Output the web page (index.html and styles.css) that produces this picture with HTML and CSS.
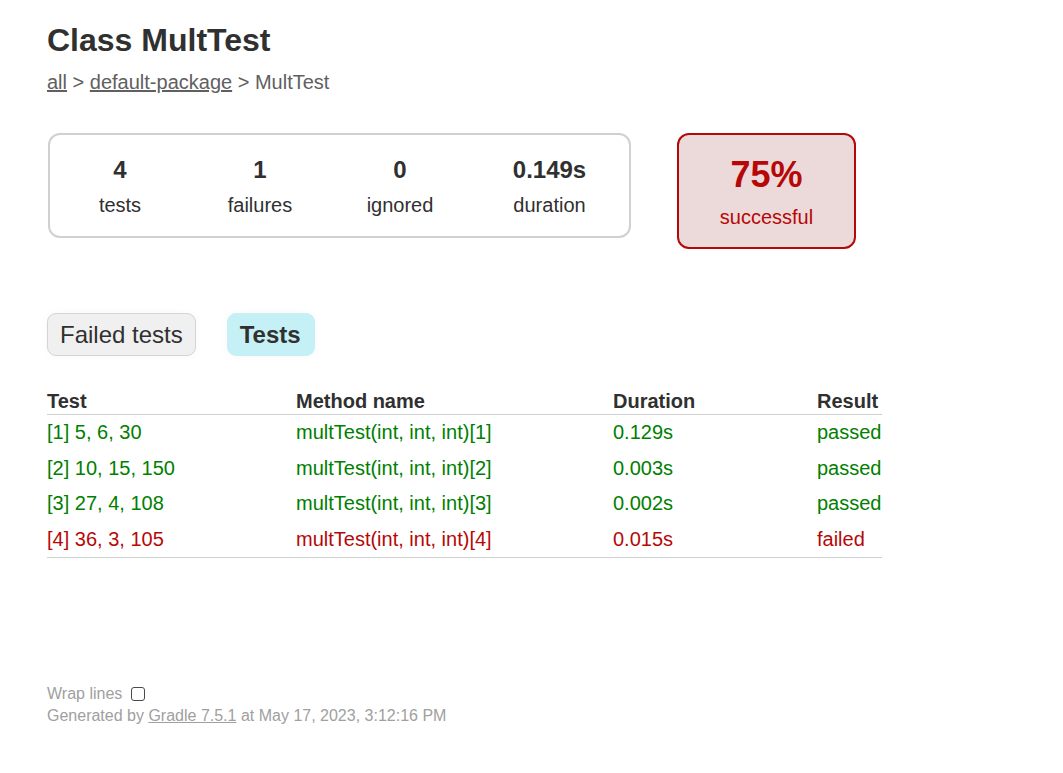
FILE: index.html
```html
<!DOCTYPE html>
<html lang="en">
<head>
<meta charset="utf-8">
<title>Test results - Class MultTest</title>
<link rel="stylesheet" href="styles.css">
</head>
<body>
<div class="content">
  <h1 class="title">Class MultTest</h1>
  <div class="breadcrumbs"><a href="#">all</a> &gt; <a href="#">default-package</a> &gt; MultTest</div>

  <div class="summary">
    <div class="summary-group">
      <div class="info-box">
        <div class="counter">4</div>
        <p class="label">tests</p>
      </div>
      <div class="info-box">
        <div class="counter">1</div>
        <p class="label">failures</p>
      </div>
      <div class="info-box">
        <div class="counter">0</div>
        <p class="label">ignored</p>
      </div>
      <div class="info-box">
        <div class="counter">0.149s</div>
        <p class="label">duration</p>
      </div>
    </div>
    <div class="success-rate">
      <div class="percent">75%</div>
      <p class="label">successful</p>
    </div>
  </div>

  <ul class="tab-links">
    <li class="tab"><a href="#">Failed tests</a></li>
    <li class="tab selected"><a href="#">Tests</a></li>
  </ul>

  <table class="results">
    <colgroup>
      <col class="col-test">
      <col class="col-method">
      <col class="col-duration">
      <col class="col-result">
    </colgroup>
    <thead>
      <tr><th>Test</th><th>Method name</th><th>Duration</th><th>Result</th></tr>
    </thead>
    <tbody>
      <tr class="success"><td>[1] 5, 6, 30</td><td>multTest(int, int, int)[1]</td><td>0.129s</td><td>passed</td></tr>
      <tr class="success"><td>[2] 10, 15, 150</td><td>multTest(int, int, int)[2]</td><td>0.003s</td><td>passed</td></tr>
      <tr class="success"><td>[3] 27, 4, 108</td><td>multTest(int, int, int)[3]</td><td>0.002s</td><td>passed</td></tr>
      <tr class="failures"><td>[4] 36, 3, 105</td><td>multTest(int, int, int)[4]</td><td>0.015s</td><td>failed</td></tr>
    </tbody>
  </table>

  <div class="footer">
    <div class="wrap-line">
      <label class="wrap-label" for="wrap">Wrap lines</label>
      <input class="wrap-toggle" id="wrap" type="checkbox">
    </div>
    <p class="generated">Generated by <a href="#">Gradle 7.5.1</a> at May 17, 2023, 3:12:16 PM</p>
  </div>
</div>
</body>
</html>
```

FILE: styles.css
```css
html, body {
  margin: 0;
  padding: 0;
  background: #ffffff;
}

body {
  font-family: "Liberation Sans", Arial, sans-serif;
  font-size: 20px;
  line-height: 23px;
  color: #303030;
}

a {
  color: inherit;
}

.content {
  padding: 22px 50px 30px 47px;
}

.title {
  margin: 0;
  font-size: 32px;
  line-height: 37px;
  font-weight: bold;
  white-space: nowrap;
}

.breadcrumbs {
  margin-top: 12px;
  color: #606060;
}

.summary {
  margin-top: 39px;
  display: flex;
  align-items: flex-start;
  gap: 46px;
}

.summary-group {
  box-sizing: border-box;
  width: 583px;
  height: 105px;
  margin-left: 1px;
  border: 2px solid #d0d0d0;
  border-radius: 12px;
  display: grid;
  grid-template-columns: 140px 140px 140px 1fr;
  padding: 0;
}

.info-box {
  padding: 21px 0 0 0;
  text-align: center;
}

.counter {
  font-size: 24px;
  line-height: 28px;
  font-weight: bold;
  margin-bottom: 10px;
}

.label {
  margin: 0;
}

.success-rate {
  box-sizing: border-box;
  width: 179px;
  height: 116px;
  padding-top: 19px;
  border: 2px solid #b60808;
  border-radius: 12px;
  background: #ecdada;
  color: #b60808;
  text-align: center;
}

.percent {
  font-size: 36px;
  line-height: 41px;
  font-weight: bold;
  margin-bottom: 11px;
}

.tab-links {
  list-style: none;
  margin: 64px 0 0 0;
  padding: 0;
  display: flex;
  gap: 31px;
}

.tab {
  padding: 6px 12px;
  border: 1px solid #d4d4d4;
  border-radius: 9px;
  background: #f0f0f0;
  font-size: 24px;
  line-height: 29px;
  box-shadow: 0 0 10px rgba(0, 0, 0, 0.03);
}

.tab a {
  text-decoration: none;
  display: block;
}

.tab.selected {
  background: #c5f0f5;
  border-color: #c5f0f5;
  font-weight: bold;
  padding-right: 13px;
}

.results {
  margin-top: 33px;
  border-collapse: collapse;
  table-layout: fixed;
  width: 835px;
  border-bottom: 1px solid #d0d0d0;
}

.col-test { width: 249px; }
.col-method { width: 317px; }
.col-duration { width: 204px; }
.col-result { width: 65px; }

.results th {
  text-align: left;
  white-space: nowrap;
  padding: 1px 0;
  font-weight: bold;
  border-bottom: 1px solid #d0d0d0;
}

.results td {
  white-space: nowrap;
  padding: 6px 0 6.5px 0;
}

.results tr.success td {
  color: #008000;
}

.results tr.failures td {
  color: #b60808;
}

.footer {
  margin-top: 126px;
  font-size: 16px;
  line-height: 18px;
  color: #a0a0a0;
  white-space: nowrap;
}

.wrap-line {
  display: flex;
  align-items: center;
  height: 19px;
}

.wrap-toggle {
  appearance: none;
  -webkit-appearance: none;
  box-sizing: border-box;
  width: 14px;
  height: 14px;
  margin: 0 0 0 9px;
  border: 1.5px solid #4a4a4a;
  border-radius: 3px;
  background: #ffffff;
}

.generated {
  margin: 4px 0 0 0;
}

.generated a {
  color: #a0a0a0;
}
```
